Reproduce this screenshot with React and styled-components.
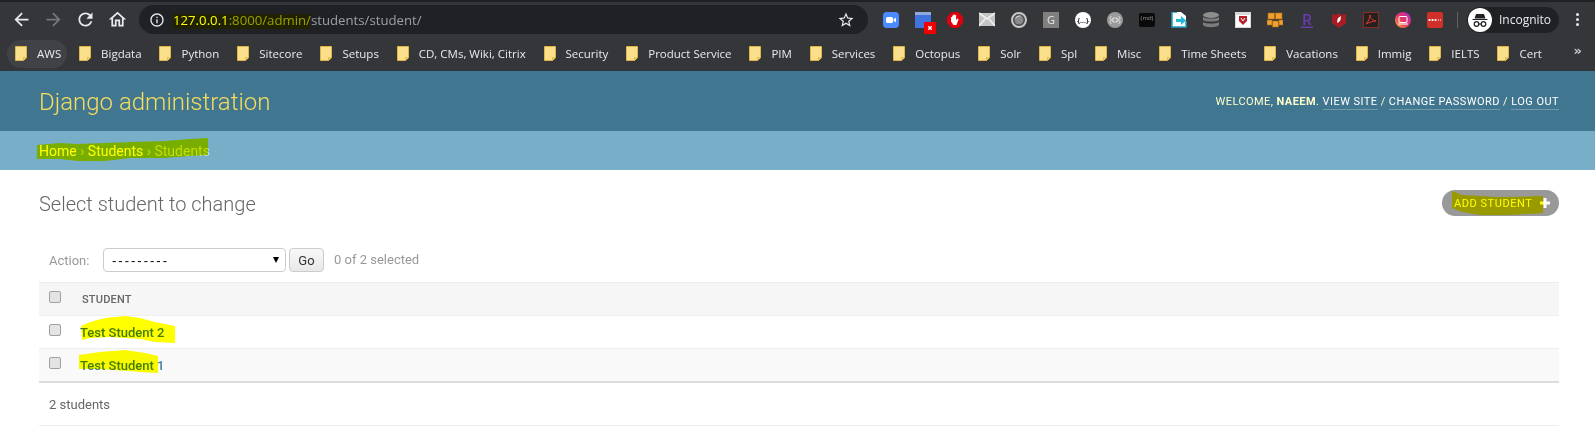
import React from 'react'
import styled, { createGlobalStyle } from 'styled-components'

const GlobalStyle = createGlobalStyle`
    html, body {
        margin: 0;
        padding: 0;
        background: #ffffff;
    }
    body {
        font-family: Roboto, "Liberation Sans", sans-serif;
        color: #333333;
    }
`

const Page = styled('div')`
    position: relative;
    width: 1595px;
    height: 434px;
    overflow: hidden;
    background: #ffffff;
`

/* browser chrome */
const Chrome = styled('div')`
    height: 71px;
    background: #35363a;
    border-top: 2px solid #202124;
    box-sizing: border-box;
`

const Toolbar = styled('div')`
    display: flex;
    align-items: center;
    height: 35px;
    padding-left: 5px;
`

const NavButton = styled('div')`
    display: flex;
    align-items: center;
    justify-content: center;
    width: 32px;
    flex: none;
`

const AddressBar = styled('div')`
    display: flex;
    align-items: center;
    width: 729px;
    height: 29px;
    margin-left: 6px;
    padding: 0 13px 0 10px;
    box-sizing: border-box;
    background: #202124;
    border-radius: 15px;
    flex: none;
`

const Url = styled('div')`
    flex: 1;
    margin-left: 8px;
    font-family: "Open Sans", sans-serif;
    font-size: 13.2px;
    white-space: nowrap;
    color: #9aa0a6;
`

const UrlMain = styled('span')`
    color: ${props => props.$bright ? '#ffffff' : '#bdc1c6'};
`

const Extensions = styled('div')`
    display: flex;
    align-items: center;
    gap: 16px;
    margin-left: 15px;
`

const ExtIcon = styled('svg')`
    display: block;
    width: 16px;
    height: 16px;
    flex: none;
`

const Separator = styled('div')`
    width: 1px;
    height: 16px;
    background: #5f6368;
    margin-left: 14px;
    flex: none;
`

const IncognitoPill = styled('div')`
    display: flex;
    align-items: center;
    gap: 7px;
    width: 92px;
    height: 26px;
    margin-left: 9px;
    padding-left: 1px;
    box-sizing: border-box;
    background: #202124;
    border-radius: 13px;
    color: #e8eaed;
    font-family: "Open Sans", sans-serif;
    font-size: 12px;
    flex: none;
`

const Dots = styled('div')`
    display: flex;
    flex-direction: column;
    gap: 2px;
    margin-left: 17px;
`

const Dot = styled('span')`
    width: 3px;
    height: 3px;
    border-radius: 50%;
    background: #e8eaed;
`

const BookmarkBar = styled('div')`
    position: relative;
    display: flex;
    align-items: center;
    gap: 3.9px;
    height: 33px;
    padding-left: 7px;
`

const Bookmark = styled('div')`
    display: flex;
    align-items: center;
    gap: 10px;
    height: 28px;
    padding: 0 6px 0 8px;
    border-radius: 14px;
    background: ${props => props.$active ? '#414246' : 'transparent'};
    color: #e8eaed;
    font-family: "Open Sans", sans-serif;
    font-size: 11.5px;
    white-space: nowrap;
    flex: none;
`

const Folder = styled('svg')`
    display: block;
    width: 12px;
    height: 15px;
    flex: none;
`

const Overflow = styled('span')`
    position: absolute;
    right: 13px;
    top: 6px;
    color: #c8cacd;
    font-family: "DejaVu Sans", sans-serif;
    font-size: 13px;
    font-weight: 700;
`

/* django admin */
const Header = styled('div')`
    display: flex;
    align-items: center;
    justify-content: space-between;
    height: 60px;
    padding: 0 36px 0 39px;
    background: #417690;
`

const Branding = styled('div')`
    margin-top: 2px;
    font-size: 24px;
    font-weight: 300;
    color: #f5dd5d;
`

const UserTools = styled('div')`
    font-size: 11px;
    letter-spacing: 0.445px;
    text-transform: uppercase;
    color: #ffffcc;
    margin-top: 1px;
`

const UserLink = styled('span')`
    color: #ffffff;
    border-bottom: 1px solid rgba(255, 255, 255, 0.25);
    padding-bottom: 1px;
`

const Breadcrumbs = styled('div')`
    display: flex;
    align-items: center;
    height: 39px;
    padding-left: 39px;
    background: #79aec8;
    color: #c4dce8;
    font-size: 14px;
`

const Crumb = styled('span')`
    color: #ffffff;
    font-weight: 400;
`

const Content = styled('div')`
    padding: 20px 36px 0 39px;
`

const TitleRow = styled('div')`
    display: flex;
    align-items: center;
    justify-content: space-between;
    height: 26px;
`

const Title = styled('h1')`
    margin: 2px 0 0 0;
    font-size: 20px;
    font-weight: 300;
    color: #666666;
`

const AddButton = styled('div')`
    display: flex;
    align-items: center;
    gap: 8px;
    height: 26px;
    width: 117px;
    box-sizing: border-box;
    padding-left: 12px;
    border-radius: 13px;
    background: #999999;
    color: #ffffff;
    font-size: 11px;
    font-weight: 400;
    letter-spacing: 0.55px;
    text-transform: uppercase;
`

const Actions = styled('div')`
    display: flex;
    align-items: center;
    height: 24px;
    margin-top: 32px;
    padding-left: 10px;
    color: #999999;
    font-size: 13px;
`

const ActionLabel = styled('span')`
    color: #999999;
    width: 54px;
    flex: none;
`

const SelectWrap = styled('div')`
    position: relative;
    width: 183px;
    height: 24px;
    flex: none;
`

const Select = styled('select')`
    appearance: none;
    width: 100%;
    height: 100%;
    box-sizing: border-box;
    padding: 0 0 0 8px;
    background: #ffffff;
    border: 1px solid #cccccc;
    border-radius: 4px;
    color: #000000;
    font-family: "Liberation Sans", sans-serif;
    font-size: 13px;
    letter-spacing: 2px;
`

const SelectArrow = styled('span')`
    position: absolute;
    right: 7px;
    top: 9px;
    width: 0;
    height: 0;
    border-left: 3px solid transparent;
    border-right: 3px solid transparent;
    border-top: 6px solid #000000;
`

const GoButton = styled('div')`
    display: flex;
    align-items: center;
    justify-content: center;
    width: 35px;
    height: 24px;
    margin-left: 3px;
    box-sizing: border-box;
    border: 1px solid #cccccc;
    border-radius: 4px;
    background: linear-gradient(#f8f8f8, #e8e8e8);
    color: #333333;
    font-size: 13px;
    flex: none;
`

const Selected = styled('span')`
    margin-left: 10px;
    margin-top: -2px;
    color: #999999;
`

const Table = styled('div')`
    margin-top: 10px;
    border-bottom: 2px solid #dddddd;
`

const Row = styled('div')`
    display: flex;
    align-items: center;
    height: ${props => props.$height}px;
    box-sizing: border-box;
    background: ${props => props.$shade};
    border-top: 1px solid #eeeeee;
`

const CheckCell = styled('div')`
    display: flex;
    width: 41px;
    padding-left: 10px;
    box-sizing: border-box;
    margin-top: -4px;
    flex: none;
`

const Checkbox = styled('input')`
    appearance: none;
    width: 12px;
    height: 12px;
    margin: 0;
    background: #e4e4e4;
    border: 1px solid #a0a0a0;
    border-radius: 2px;
    box-sizing: border-box;
`

const HeadCell = styled('div')`
    margin-left: 2px;
    color: #666666;
    font-size: 11px;
    font-weight: 500;
    letter-spacing: 0.2px;
    text-transform: uppercase;
`

const StudentLink = styled('a')`
    color: #447e9b;
    font-size: 13px;
    font-weight: 500;
`

const Paginator = styled('div')`
    display: flex;
    align-items: center;
    height: 42px;
    padding-left: 10px;
    border-bottom: 1px solid #eeeeee;
    color: #666666;
    font-size: 13px;
`

const HighlightLayer = styled('svg')`
    position: absolute;
    left: 0;
    top: 0;
    width: 1595px;
    height: 434px;
    mix-blend-mode: multiply;
    pointer-events: none;
`

const BOOKMARKS = ['AWS', 'Bigdata', 'Python', 'Sitecore', 'Setups', 'CD, CMs, Wiki, Citrix', 'Security', 'Product Service', 'PIM', 'Services', 'Octopus', 'Solr', 'Spl', 'Misc', 'Time Sheets', 'Vacations', 'Immig', 'IELTS', 'Cert']

const HIGHLIGHTS = [
    '173,14 310,14 310,29 173,29',
    '37,145 60,143 78,144 105,143 130,142 165,141 190,139 208,138 208,155 190,156 165,158 130,158 105,161 78,161 60,159 37,159',
    '1452,191 1462,195 1500,197 1543,196 1543,213 1510,215 1480,215 1462,212 1452,208',
    '81,326 90,322 105,318 125,316 140,318 155,322 175,326 175,343 155,342 140,339 110,337 90,338 82,340',
    '79,355 100,352 125,350 145,353 158,356 158,373 140,372 115,370 95,369 79,369',
]

const NavIcon = ({ d, color = '#e8eaed', size = 21, flip }) => (
    <svg width={size} height={size} viewBox="0 0 24 24" style={flip ? { transform: 'scaleX(-1)' } : undefined}>
        <path d={d} fill={color} />
    </svg>
)

const FolderIcon = () => (
    <Folder viewBox="0 0 12 16" preserveAspectRatio="none">
        <path d="M.5.5h11v12l-3 3H.5z" fill="#fbe08c" stroke="#e3b748" />
        <path d="M8.5 15.5v-3h3" fill="#f5cf63" stroke="#e3b748" />
    </Folder>
)

const ExtensionIcons = () => (
    <>
        <ExtIcon viewBox="0 0 16 16">
            <rect width="16" height="16" rx="4" fill="#4a8cff" />
            <rect x="3" y="5" width="7" height="6" rx="1.5" fill="#fff" />
            <path d="M10.5 7.5l2.5-2v5l-2.5-2z" fill="#fff" />
        </ExtIcon>
        <ExtIcon viewBox="0 0 16 16" style={{ overflow: 'visible' }}>
            <rect width="16" height="16" fill="#3f73dd" />
            <rect width="16" height="3" fill="#8fa9d8" />
            <rect x="9" y="10" width="12" height="12" fill="#f00000" />
            <path d="M13.3 14.3l3.4 3.4m0-3.4l-3.4 3.4" stroke="#fff" strokeWidth="1.4" />
        </ExtIcon>
        <ExtIcon viewBox="0 0 16 16">
            <path d="M5 0h6l5 5v6l-5 5H5l-5-5V5z" fill="#e0000d" />
            <path d="M4 7.500V5h1.200v2V3.500h1.300V7V2.500h1.300V7V3h1.300v5l1.500-1.500 1 .7L9.500 13H6.500L4 9.500z" fill="#fff" />
        </ExtIcon>
        <ExtIcon viewBox="0 0 16 16">
            <rect y="1" width="16" height="13" fill="#c4c4c4" />
            <path d="M0 1l8 6 8-6M0 14l6-7m10 7l-6-7" stroke="#f0f0f0" strokeWidth="1.6" fill="none" />
        </ExtIcon>
        <ExtIcon viewBox="0 0 16 16">
            <circle cx="8" cy="8" r="7" fill="#4a4a4c" stroke="#c8c8c8" strokeWidth="2" />
            <circle cx="8" cy="8" r="4.500" fill="#8a8a8a" />
            <path d="M4 7a4.500 4.500 0 0 1 7-2.500C8 4 6 5 4 7z" fill="#f0f0f0" />
        </ExtIcon>
        <ExtIcon viewBox="0 0 16 16">
            <rect width="16" height="16" fill="#808080" />
            <text x="8" y="12" textAnchor="middle" fontSize="11" fontFamily="Open Sans" fill="#e8e8e8">G</text>
        </ExtIcon>
        <ExtIcon viewBox="0 0 16 16">
            <circle cx="8" cy="8" r="8" fill="#ffffff" />
            <text x="8" y="10.500" textAnchor="middle" fontSize="7" fontWeight="700" fontFamily="Open Sans" fill="#202124">{'{…}'}</text>
        </ExtIcon>
        <ExtIcon viewBox="0 0 16 16">
            <circle cx="8" cy="8" r="8" fill="#9a9a9a" />
            <path d="M6 6h4v4H6zM6 6a1.500 1.500 0 1 1-1.500-1.500M10 6a1.500 1.500 0 1 0 1.500-1.500M6 10a1.500 1.500 0 1 0-1.500 1.500M10 10a1.500 1.500 0 1 1 1.500 1.500" stroke="#dcdcdc" strokeWidth="1" fill="none" />
        </ExtIcon>
        <ExtIcon viewBox="0 0 16 16">
            <rect y="1" width="16" height="14" rx="2" fill="#0a0a0a" />
            <text x="8" y="8" textAnchor="middle" fontSize="6" fontFamily="Open Sans" fill="#9a9a9a">(md)</text>
        </ExtIcon>
        <ExtIcon viewBox="0 0 16 16">
            <path d="M1 0h9l5 4v11H1z" fill="#ffffff" />
            <path d="M6 0H1v15h14V9" fill="none" stroke="#1fa4c7" strokeWidth="1.5" />
            <path d="M5 7h5V4l5 4.500L10 13v-3H5z" fill="#22b8d8" />
        </ExtIcon>
        <ExtIcon viewBox="0 0 16 16">
            <ellipse cx="8" cy="3" rx="8" ry="3" fill="#8d8d8d" />
            <path d="M0 5c2 2 14 2 16 0v3c-2 2-14 2-16 0zM0 10c2 2 14 2 16 0v3c-2 3-14 3-16 0z" fill="#7b7b7b" />
        </ExtIcon>
        <ExtIcon viewBox="0 0 16 16">
            <rect width="16" height="16" fill="#d8d8d8" />
            <rect x="1" y="3" width="14" height="12" fill="#ffffff" />
            <path d="M4 4h8v5l-4 4-4-4z" fill="#b8202c" />
            <path d="M6 6l2 3 2-3" stroke="#fff" strokeWidth="1" fill="none" />
        </ExtIcon>
        <ExtIcon viewBox="0 0 16 16">
            <g fill="#f0a030" stroke="#a86a10" strokeWidth=".6">
                <rect x="1" y="1" width="6.500" height="6" />
                <rect x="8.500" y="1" width="6.500" height="6" />
                <rect x="0" y="8" width="5" height="5" />
                <rect x="5.500" y="9" width="6" height="6" />
                <rect x="12" y="8" width="4" height="5" />
            </g>
        </ExtIcon>
        <ExtIcon viewBox="0 0 16 16">
            <text x="8" y="13" textAnchor="middle" fontSize="15" fontWeight="500" fontFamily="Roboto" fill="#6a3ab0">R</text>
            <rect x="2" y="14.500" width="12" height="1.500" fill="#6a3ab0" />
        </ExtIcon>
        <ExtIcon viewBox="0 0 16 16">
            <path d="M1 2l4 1 3-2 3 2 4-1v9l-7 5-7-5z" fill="#a81c24" />
            <path d="M6 10l1-4 3-2-.5 4-2.500 3z" fill="#ffffff" />
        </ExtIcon>
        <ExtIcon viewBox="0 0 16 16">
            <rect x=".5" y=".5" width="15" height="15" fill="#262020" stroke="#8a2c22" />
            <path d="M3 12c2-2 4-6 4-9 0 3 2 5 6 6-3 0-6 1-10 3z" fill="none" stroke="#e03a2a" strokeWidth="1" />
        </ExtIcon>
        <ExtIcon viewBox="0 0 16 16">
            <defs>
                <linearGradient id="insta" x1="0" y1="1" x2="1" y2="0">
                    <stop offset="0" stopColor="#f9a825" />
                    <stop offset=".5" stopColor="#e8336a" />
                    <stop offset="1" stopColor="#a030c8" />
                </linearGradient>
            </defs>
            <circle cx="8" cy="8" r="8" fill="url(#insta)" />
            <rect x="4" y="4.500" width="8" height="6" rx="1" fill="none" stroke="#fff" strokeWidth="1" />
            <path d="M3 12h10" stroke="#fff" strokeWidth="1" />
        </ExtIcon>
        <ExtIcon viewBox="0 0 16 16">
            <rect width="16" height="16" rx="2" fill="#d0302a" />
            <path d="M2.500 8h.1M5.500 8h.1M8.500 8h.1" stroke="#fff" strokeWidth="2.200" strokeLinecap="round" />
            <path d="M11 8h3" stroke="#fff" strokeWidth="1.200" strokeDasharray="1 1" />
        </ExtIcon>
    </>
)

const App = () => {
    return (
        <Page>
            <GlobalStyle />
            <Chrome>
                <Toolbar>
                    <NavButton><NavIcon d="M20 11H7.830l5.590-5.590L12 4l-8 8 8 8 1.410-1.410L7.830 13H20v-2z" /></NavButton>
                    <NavButton><NavIcon d="M20 11H7.830l5.590-5.590L12 4l-8 8 8 8 1.410-1.410L7.830 13H20v-2z" color="#75777b" flip /></NavButton>
                    <NavButton><NavIcon d="M17.650 6.350C16.200 4.900 14.210 4 12 4c-4.420 0-7.990 3.580-7.990 8s3.570 8 7.990 8c3.730 0 6.840-2.550 7.730-6h-2.080c-.82 2.330-3.040 4-5.650 4-3.310 0-6-2.690-6-6s2.690-6 6-6c1.660 0 3.140.69 4.220 1.780L13 11h7V4l-2.350 2.350z" /></NavButton>
                    <NavButton><NavIcon d="M12 5.690l5 4.500V18h-2v-6H9v6H7v-7.810l5-4.500M12 3L2 12h3v8h6v-6h2v6h6v-8h3L12 3z" /></NavButton>
                    <AddressBar>
                        <NavIcon d="M11 7h2v2h-2zm0 4h2v6h-2zm1-9C6.480 2 2 6.480 2 12s4.480 10 10 10 10-4.480 10-10S17.520 2 12 2zm0 18c-4.410 0-8-3.590-8-8s3.590-8 8-8 8 3.590 8 8-3.590 8-8 8z" size={16} />
                        <Url><UrlMain $bright>127.0.0.1</UrlMain>:8000/admin/students/student/</Url>
                        <NavIcon d="M22 9.240l-7.190-.62L12 2 9.190 8.630 2 9.240l5.460 4.730L5.820 21 12 17.270 18.180 21l-1.630-7.030L22 9.240zM12 15.400l-3.760 2.270 1-4.280-3.320-2.880 4.380-.38L12 6.100l1.710 4.040 4.380.38-3.320 2.880 1 4.280L12 15.400z" size={18} />
                    </AddressBar>
                    <Extensions><ExtensionIcons /></Extensions>
                    <Separator />
                    <IncognitoPill>
                        <svg width="24" height="24" viewBox="0 0 24 24">
                            <circle cx="12" cy="12" r="12" fill="#ffffff" />
                            <path d="M8 6h8l1.500 4.500h-11zM4.500 11h15v1h-15z" fill="#202124" />
                            <circle cx="8.500" cy="16" r="2.300" fill="none" stroke="#202124" strokeWidth="1.200" />
                            <circle cx="15.500" cy="16" r="2.300" fill="none" stroke="#202124" strokeWidth="1.200" />
                            <path d="M10.800 16h2.400" stroke="#202124" strokeWidth="1.200" />
                        </svg>
                        Incognito
                    </IncognitoPill>
                    <Dots><Dot /><Dot /><Dot /></Dots>
                </Toolbar>
                <BookmarkBar>
                    {BOOKMARKS.map((name, i) => (
                        <Bookmark key={name} $active={i === 0}>
                            <FolderIcon />
                            {name}
                        </Bookmark>
                    ))}
                    <Overflow>»</Overflow>
                </BookmarkBar>
            </Chrome>
            <Header>
                <Branding>Django administration</Branding>
                <UserTools>
                    Welcome, <strong>Naeem</strong>. <UserLink>View site</UserLink> / <UserLink>Change password</UserLink> / <UserLink>Log out</UserLink>
                </UserTools>
            </Header>
            <Breadcrumbs>
                <Crumb>Home</Crumb>&nbsp;›&nbsp;<Crumb>Students</Crumb>&nbsp;›&nbsp;Students
            </Breadcrumbs>
            <Content>
                <TitleRow>
                    <Title>Select student to change</Title>
                    <AddButton>
                        Add student
                        <svg width="10" height="10" viewBox="0 0 10 10"><path d="M3.500 0h3v3.500H10v3H6.500V10h-3V6.500H0v-3h3.500z" fill="#ffffff" /></svg>
                    </AddButton>
                </TitleRow>
                <Actions>
                    <ActionLabel>Action:</ActionLabel>
                    <SelectWrap>
                        <Select defaultValue=""><option value="">---------</option></Select>
                        <SelectArrow />
                    </SelectWrap>
                    <GoButton>Go</GoButton>
                    <Selected>0 of 2 selected</Selected>
                </Actions>
                <Table>
                    <Row $height={33} $shade="#f6f6f6">
                        <CheckCell><Checkbox type="checkbox" /></CheckCell>
                        <HeadCell>Student</HeadCell>
                    </Row>
                    <Row $height={33} $shade="#ffffff">
                        <CheckCell><Checkbox type="checkbox" /></CheckCell>
                        <StudentLink>Test Student 2</StudentLink>
                    </Row>
                    <Row $height={33} $shade="#f9f9f9">
                        <CheckCell><Checkbox type="checkbox" /></CheckCell>
                        <StudentLink>Test Student 1</StudentLink>
                    </Row>
                </Table>
                <Paginator>2 students</Paginator>
            </Content>
            <HighlightLayer viewBox="0 0 1595 434">
                {HIGHLIGHTS.map(points => <polygon key={points} points={points} fill="#ffff00" />)}
            </HighlightLayer>
        </Page>
    )
}

export default App
